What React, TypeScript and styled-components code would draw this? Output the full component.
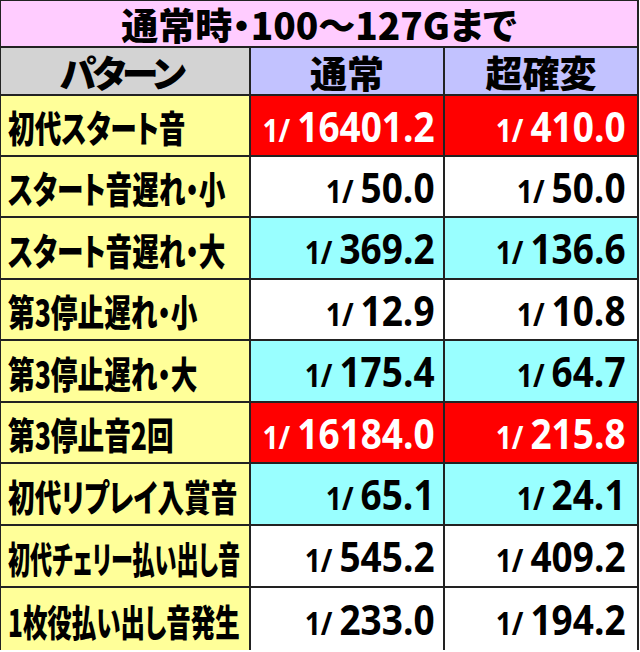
import { useLayoutEffect, useRef, useState } from 'react';
import styled, { createGlobalStyle } from 'styled-components';

const GlobalStyle = createGlobalStyle`
  html, body {
    margin: 0;
    padding: 0;
    background: #ffffff;
  }
  body {
    height: 652px;
    overflow: hidden;
    font-family: "Noto Sans CJK JP", "Noto Sans", sans-serif;
    font-feature-settings: "palt" 1;
  }
`;

type Tone = 'red' | 'white' | 'cyan';

const toneBg: Record<Tone, string> = {
  red: '#FF0000',
  white: '#FFFFFF',
  cyan: '#99FFFF',
};

const rows: { label: string; normal: string; kakuhen: string; tone: Tone }[] = [
  { label: '初代スタート音', normal: '16401.2', kakuhen: '410.0', tone: 'red' },
  { label: 'スタート音遅れ・小', normal: '50.0', kakuhen: '50.0', tone: 'white' },
  { label: 'スタート音遅れ・大', normal: '369.2', kakuhen: '136.6', tone: 'cyan' },
  { label: '第3停止遅れ・小', normal: '12.9', kakuhen: '10.8', tone: 'white' },
  { label: '第3停止遅れ・大', normal: '175.4', kakuhen: '64.7', tone: 'cyan' },
  { label: '第3停止音2回', normal: '16184.0', kakuhen: '215.8', tone: 'red' },
  { label: '初代リプレイ入賞音', normal: '65.1', kakuhen: '24.1', tone: 'cyan' },
  { label: '初代チェリー払い出し音', normal: '545.2', kakuhen: '409.2', tone: 'white' },
  { label: '1枚役払い出し音発生', normal: '233.0', kakuhen: '194.2', tone: 'white' },
];

// labels are squeezed horizontally, long ones a bit more so they fit the cell
const BASE_SCALE = 0.72;
const MAX_LABEL_W = 232;

const FitLabel = ({ text }: { text: string }) => {
  const ref = useRef<HTMLSpanElement>(null);
  const [scale, setScale] = useState(BASE_SCALE);

  useLayoutEffect(() => {
    if (!ref.current) return;
    const w = ref.current.offsetWidth;
    setScale(Math.min(BASE_SCALE, MAX_LABEL_W / w));
  }, [text]);

  return (
    <LabelText ref={ref} style={{ transform: `scaleX(${scale})` }}>
      {text}
    </LabelText>
  );
};

const App = () => {
  return (
    <>
      <GlobalStyle />
      <Table>
        <Title>通常時・100～127Gまで</Title>
        <HeadCell $bg="#D3D3D3" $tight>パターン</HeadCell>
        <HeadCell $bg="#C2C2FF">通常</HeadCell>
        <HeadCell $bg="#C2C2FF">超確変</HeadCell>
        {rows.map((r) => (
          <Row key={r.label}>
            <LabelCell>
              <FitLabel text={r.label} />
            </LabelCell>
            <ValueCell $tone={r.tone} $padRight={8}>
              <Value>
                <Prefix>1/</Prefix>
                {r.normal}
              </Value>
            </ValueCell>
            <ValueCell $tone={r.tone} $padRight={11}>
              <Value>
                <Prefix>1/</Prefix>
                {r.kakuhen}
              </Value>
            </ValueCell>
          </Row>
        ))}
      </Table>
    </>
  );
};

const Table = styled.div`
  display: grid;
  width: 639px;
  box-sizing: border-box;
  grid-template-columns: 248px 192px 192px;
  grid-template-rows: 45px 46px 59px 59px 60px 59px 60px 59px 60px 60px 62px;
  gap: 2px;
  padding: 1px 2px 0 1px;
  background-color: #222222;
`;

const Title = styled.div`
  grid-column: 1 / -1;
  background-color: #FFCCFF;
  display: flex;
  align-items: center;
  justify-content: center;
  font-size: 37px;
  font-weight: 900;
  line-height: 1;
  color: #000;
  padding-top: 2px;
`;

const HeadCell = styled.div<{ $bg: string; $tight?: boolean }>`
  background-color: ${(p) => p.$bg};
  display: flex;
  align-items: center;
  justify-content: center;
  font-size: 37px;
  font-weight: 900;
  line-height: 1;
  letter-spacing: ${(p) => (p.$tight ? '-4px' : '0')};
  color: #000;
  padding-top: 2px;
  padding-right: ${(p) => (p.$tight ? '8px' : '0')};
`;

const Row = styled.div`
  display: contents;
`;

const LabelCell = styled.div`
  background-color: #FFFF99;
  display: flex;
  align-items: center;
  padding-left: 7px;
  padding-top: 4px;
  overflow: hidden;
`;

const LabelText = styled.span`
  display: inline-block;
  font-size: 37px;
  font-weight: 900;
  line-height: 1;
  color: #000;
  white-space: nowrap;
  transform-origin: left center;
`;

const ValueCell = styled.div<{ $tone: Tone; $padRight: number }>`
  background-color: ${(p) => toneBg[p.$tone]};
  color: ${(p) => (p.$tone === 'red' ? '#FFFFFF' : '#000000')};
  display: flex;
  align-items: center;
  justify-content: flex-end;
  padding-right: ${(p) => p.$padRight}px;
  overflow: hidden;
`;

const Value = styled.span`
  display: inline-block;
  font-family: "Open Sans", "Liberation Sans", sans-serif;
  font-weight: 700;
  font-size: 42px;
  line-height: 1;
  white-space: nowrap;
  transform: scaleX(0.88);
  transform-origin: right center;
`;

const Prefix = styled.span`
  font-size: 32px;
  margin-right: 8px;
`;

export default App;
